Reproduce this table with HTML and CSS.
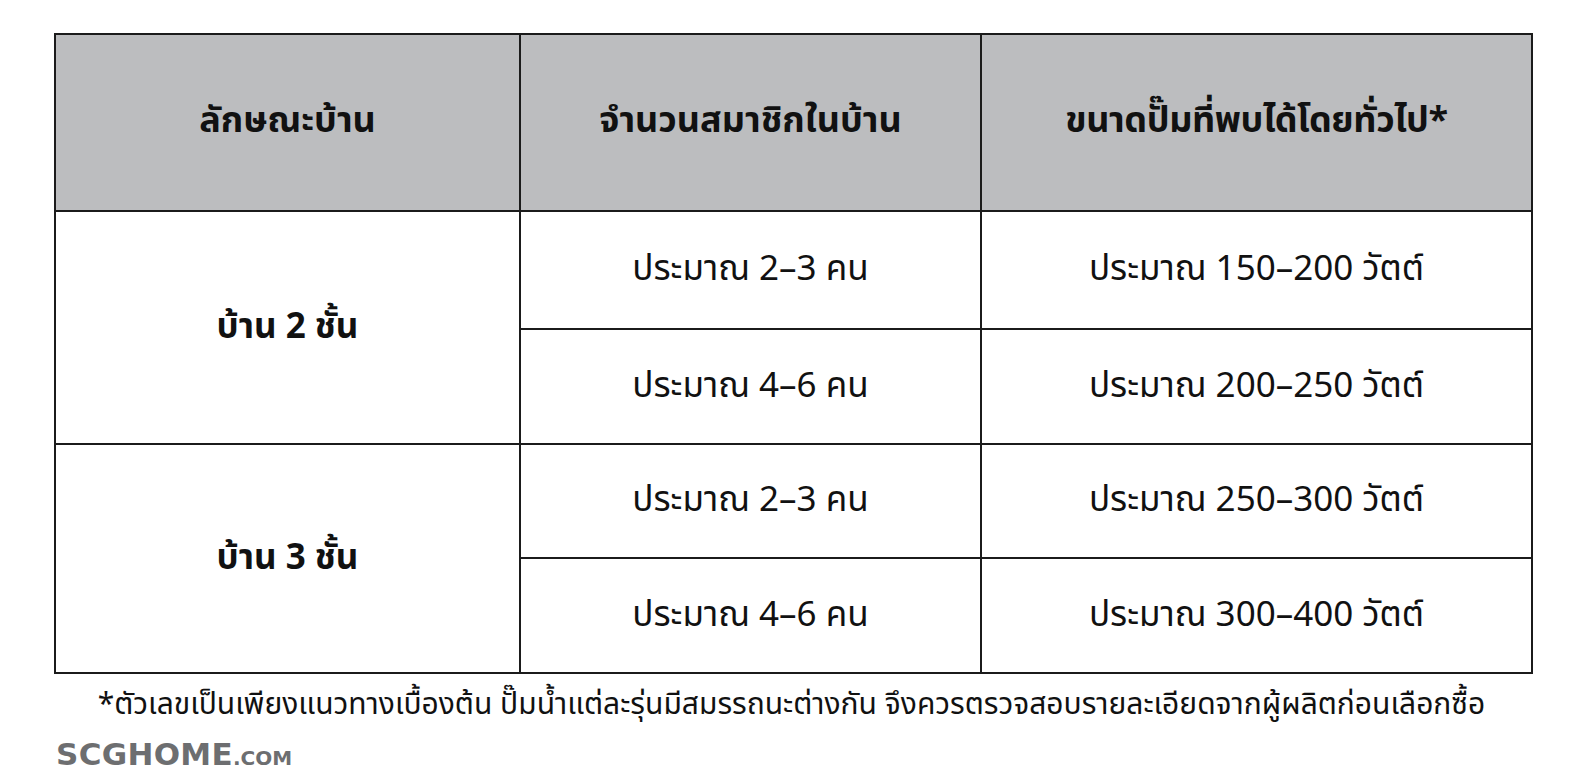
FILE: index.html
```html
<!DOCTYPE html>
<html lang="th">
<head>
<meta charset="utf-8">
<title>ขนาดปั๊มน้ำ</title>
<link rel="stylesheet" href="styles.css">
</head>
<body>
<div class="page">
  <table class="pump-table">
    <colgroup>
      <col class="c1">
      <col class="c2">
      <col class="c3">
    </colgroup>
    <thead>
      <tr class="head-row">
        <th>ลักษณะบ้าน</th>
        <th>จำนวนสมาชิกในบ้าน</th>
        <th class="narrow">ขนาดปั๊มที่พบได้โดยทั่วไป*</th>
      </tr>
    </thead>
    <tbody>
      <tr class="r1">
        <td class="house" rowspan="2">บ้าน 2 ชั้น</td>
        <td>ประมาณ 2–3 คน</td>
        <td>ประมาณ 150–200 วัตต์</td>
      </tr>
      <tr class="r2">
        <td>ประมาณ 4–6 คน</td>
        <td>ประมาณ 200–250 วัตต์</td>
      </tr>
      <tr class="r3">
        <td class="house" rowspan="2">บ้าน 3 ชั้น</td>
        <td>ประมาณ 2–3 คน</td>
        <td>ประมาณ 250–300 วัตต์</td>
      </tr>
      <tr class="r4">
        <td>ประมาณ 4–6 คน</td>
        <td>ประมาณ 300–400 วัตต์</td>
      </tr>
    </tbody>
  </table>
  <p class="note">*ตัวเลขเป็นเพียงแนวทางเบื้องต้น ปั๊มน้ำแต่ละรุ่นมีสมรรถนะต่างกัน จึงควรตรวจสอบรายละเอียดจากผู้ผลิตก่อนเลือกซื้อ</p>
  <div class="logo">SCGHOME<span class="dot">.COM</span></div>
</div>
</body>
</html>
```

FILE: styles.css
```css
html, body {
  margin: 0;
  padding: 0;
  background: #ffffff;
}
body {
  width: 1583px;
  height: 781px;
  overflow: hidden;
  font-family: "Noto Sans Thai", "Noto Sans Thai UI", "Noto Sans", "DejaVu Sans", sans-serif;
  color: #111111;
}
.page {
  padding: 33px 0 0 54px;
}
.pump-table {
  border-collapse: collapse;
  width: 1477px;
  table-layout: fixed;
}
.c1 { width: 465px; }
.c2 { width: 461px; }
.c3 { width: 551px; }
.pump-table th,
.pump-table td {
  border: 2px solid #1b1b1b;
  text-align: center;
  vertical-align: middle;
  padding: 0;
  font-size: 35px;
  line-height: 44px;
}
.pump-table th {
  background: #bcbdbf;
  font-weight: 700;
  font-size: 36px;
  color: #111111;
  padding-bottom: 4px;
}
.pump-table th.narrow { letter-spacing: -0.4px; }
.head-row { height: 177px; }
.r1 { height: 118px; }
.r2 { height: 115px; }
.r3 { height: 114px; }
.r4 { height: 115px; }
.pump-table td { font-weight: 400; }
.pump-table td.house { font-weight: 700; font-size: 35px; }
.note {
  margin: 12px 0 0 -54px;
  width: 1583px;
  text-align: center;
  font-size: 30px;
  line-height: 38px;
  color: #111111;
}
.logo {
  margin: 12px 0 0 2px;
  font-family: "DejaVu Sans", "Open Sans", sans-serif;
  font-weight: 700;
  font-size: 31px;
  line-height: 36px;
  letter-spacing: 0.3px;
  color: #6d6e70;
}
.logo .dot {
  font-size: 20px;
  letter-spacing: 0;
}
```
